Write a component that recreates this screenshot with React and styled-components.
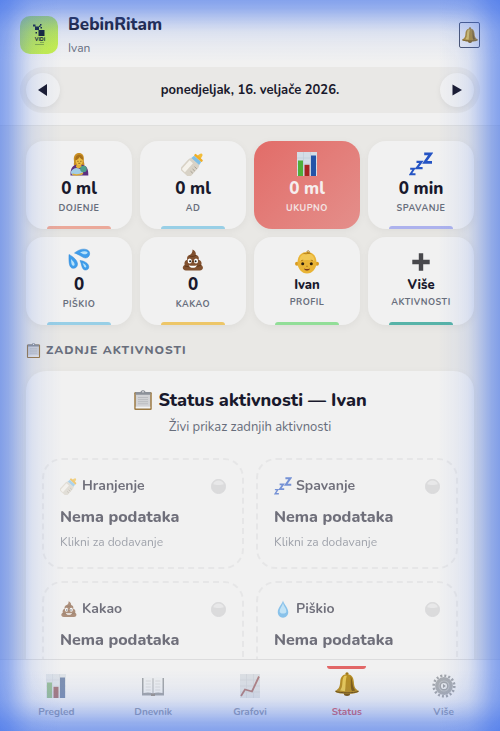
import React, { useState } from "react";
import styled, { createGlobalStyle } from "styled-components";

const GlobalStyle = createGlobalStyle`
  *, *::before, *::after {
    box-sizing: border-box;
  }
  body {
    margin: 0;
    background-color: #e9e8e5;
    color: #19192c;
    font-family: "Nunito", "Open Sans", sans-serif;
  }
  h1, h2, h3, p {
    margin: 0;
  }
  button {
    font-family: inherit;
    color: inherit;
    cursor: pointer;
  }
`;

/* ---------- icons ---------- */

const Svg = styled.svg`
  width: ${(props) => props.$size || 24}px;
  height: ${(props) => props.$size || 24}px;
  display: block;
  flex-shrink: 0;
`;

const icons = {
  nursing: (
    <>
      <path d="M7 9C6 3.500 9 1 12 1s5.500 2.500 4.800 7c-.3 2.500 1.400 4 .2 6H7.500C6.100 12.800 7.300 11 7 9z" fill="#c98f24" />
      <path d="M3.500 23.500c-.3-6 1.500-9.800 5.500-10.800h6c4.500.8 6.500 3.800 6.300 10.800z" fill="#5b2f80" />
      <path d="M9.800 12h4.200l1 3.300-4 1.500-2.200-2z" fill="#e2b038" />
      <ellipse cx="12.300" cy="8.700" rx="3.500" ry="4.200" fill="#edbf46" />
      <path d="M8.300 8.300c1.800-.4 3.400-1.700 4.200-3.400.8 1.500 2 2.500 3.700 2.900.1-3.200-1.500-5-3.900-5-2.600 0-4.200 2.200-4 5.500z" fill="#a8701a" />
      <path d="M10.300 9.300h1.300M13.200 9.300h1.300M11.300 11.300h2" stroke="#6b4312" strokeWidth=".7" />
      <path d="M4 19.500c2-3 5-4.300 8-2.800l5 1.500-2 4.500c-3 .8-6 .8-8.500.5-1.700-.3-3-1.800-2.500-3.700z" fill="#a3cde6" />
      <circle cx="16.500" cy="17" r="3.300" fill="#4f9f8c" />
      <path d="M5.500 22.300c3.500 1 7.500.7 10.500-1" stroke="#dca936" strokeWidth="1.600" fill="none" />
    </>
  ),
  bottle: (
    <g transform="rotate(42 12 12)">
      <path d="M10.300.5c.2-2.800 3.200-2.800 3.400 0l.7 3H9.600z" fill="#f2bd3a" />
      <rect x="6.800" y="2.500" width="10.400" height="2.600" rx="1" fill="#f0ae28" />
      <path d="M7.300 5.100h9.400l.6 4H6.700z" fill="#7fbfe6" />
      <path d="M6.700 8.600h10.600c1.100 1.500 1.300 2.500 1.300 4.200v8.900c0 2.100-1.100 3-2.900 3H8.300c-1.800 0-2.900-.9-2.900-3v-8.900c0-1.700.2-2.700 1.300-4.200z" fill="#d8d2c6" />
      <path d="M7 11.500h4.500v12H8.600c-1.100 0-1.600-.6-1.600-1.600z" fill="#f5f2eb" />
      <path d="M15 13h3M15 16h3M15 19h3" stroke="#9c968a" strokeWidth=".8" />
    </g>
  ),
  chart: (
    <>
      <rect x="2" y="0" width="20" height="24" fill="#d3dde6" />
      <path d="M2 6h20M2 12h20M2 18h20M8.500 0v24M15.500 0v24" stroke="#bdcad6" strokeWidth=".6" />
      <rect x="3" y="8.500" width="5" height="15.500" fill="#4fae3a" />
      <rect x="9.500" y="12.800" width="5" height="11.200" fill="#a82424" />
      <rect x="16" y="3.500" width="5" height="20.500" fill="#2354a8" />
    </>
  ),
  sleep: (
    <g fill="none" stroke="#2554c4" strokeLinejoin="miter">
      <path d="M15.200 1.800h6.500L15.700 10.300h7.300" strokeWidth="2.700" />
      <path d="M7.500 9.800h4.900L7.800 16.200h5.800" strokeWidth="2.300" />
      <path d="M1.200 16.800h3.900L1.500 22.300h5" strokeWidth="1.900" />
    </g>
  ),
  drops: (
    <g stroke="#2f86d6" strokeWidth=".5">
      <path d="M7.500 5C12 1.200 17 .2 20.500 2c3 1.700 2.800 6-.3 7.600C16.500 11.300 13.500 6.800 7.500 5z" fill="#3f9deb" />
      <path d="M2 6.500c4.200 2.200 8.500 5.700 8.500 9.600 0 3-2.200 4.400-4.500 4.200-4-.4-4.200-6-4-13.800z" fill="#3f9deb" />
      <path d="M13 12.500c4 .3 8.600 2.800 8.800 6.200.1 2.300-1.900 3.600-3.900 3.300-3.200-.5-3-5.500-4.900-9.500z" fill="#3f9deb" />
      <path d="M13 4.500c3-1.500 6-1.700 7.300-.4 1 1.200-.8 2.200-2.300 2.200-1.800 0-3.200-1-5-1.800zM4 11c1.800 2 3.600 3.500 3.600 5.500 0 1.500-1.800 1.600-2.600.4C4.200 15.600 4.200 13 4 11zM15.500 15c2 1 3.600 2 3.800 3.500 0 1-1.200 1.200-1.900.4-.8-1-1-2.500-1.900-3.900z" fill="#b6e2fb" stroke="none" />
    </g>
  ),
  poop: (
    <>
      <path d="M11.500 1.500c2.500 1.200 3.800 3 3.200 5.300 2.500.5 3.800 2.500 2.800 5 2.500.7 3.700 2.700 2.700 5.200 2.600 1.500 2.400 5.500-1.500 5.500H5c-3.700 0-4.300-4-1.300-5.500-.8-2.500.3-4.500 2.600-5.200-.8-2.500.5-4.500 2.800-5C10.500 6 11.700 4 11.500 1.500z" fill="#80502f" />
      <path d="M8.500 8.200c2.500.6 5 .2 6.600-1M6 13c3.500 1 8.500.8 11.500-.8M3.800 18c4 1.200 12 1.200 16.300-.8" stroke="#5d3519" strokeWidth=".9" fill="none" />
      <ellipse cx="8.700" cy="13" rx="2.100" ry="2.600" fill="#fff" />
      <ellipse cx="15" cy="13" rx="2.100" ry="2.600" fill="#fff" />
      <circle cx="9.100" cy="13.200" r="1" fill="#222" />
      <circle cx="14.600" cy="13.200" r="1" fill="#222" />
      <path d="M7.800 17.200c2.500.7 5.500.7 8.200 0-.8 3.300-7.200 3.500-8.200 0z" fill="#fff" />
    </>
  ),
  baby: (
    <>
      <circle cx="2" cy="13.700" r="2" fill="#d99a20" />
      <circle cx="22" cy="13.700" r="2" fill="#d99a20" />
      <path d="M12 2c6 0 9.500 4.500 9.500 10.500s-4 11-9.500 11-9.500-5-9.500-11S6 2 12 2z" fill="#e9b436" />
      <path d="M12 3.500c4.500 0 7.500 3 7.500 7.500-4.500-1.500-10.500-1.500-15 0 0-4.500 3-7.500 7.500-7.500z" fill="#f1c754" />
      <path d="M8.500 3.300c3 .9 6 .2 5.800-1.600-.1-1.300-2.300-1.300-2.300.1 0 1.100 1.800 1.700 3.500 1.600" stroke="#a87414" strokeWidth=".9" fill="none" />
      <circle cx="7.700" cy="13.800" r="1.500" fill="#2d1f10" />
      <circle cx="16.300" cy="13.800" r="1.500" fill="#2d1f10" />
      <path d="M6 10.800l2.200-.7M15.800 10.100l2.200.7M11.200 16.300h1.600" stroke="#a87414" strokeWidth=".8" />
      <path d="M9 18.500c2 .7 4 .7 6 0-.7 2.800-5.300 2.800-6 0z" fill="#7c3a1a" />
    </>
  ),
  plus: <path d="M9.800 3.300h4.400v6.500h6.500v4.400h-6.500v6.500H9.800v-6.500H3.300V9.800h6.500z" fill="#48484c" />,
  clipboard: (
    <>
      <rect x="1.500" y="2.500" width="21" height="21.500" rx="1.500" fill="#9d7a43" />
      <rect x="3.300" y="4.300" width="17.400" height="17.700" fill="#d2d3d6" />
      <path d="M6 9h12M6 11.500h12M6 14h12M6 16.500h12" stroke="#bbbdc1" strokeWidth="1.200" />
      <path d="M3.300 20h17.400v2H3.300z" fill="#f3f3f3" />
      <path d="M3 2.500h6c.7-3 5.300-3 6 0h6v3.200H3z" fill="#8c9199" />
      <circle cx="12" cy="2.200" r="1" fill="#e9e9ec" />
    </>
  ),
  bell: (
    <>
      <circle cx="12" cy="1.800" r="1.600" fill="#9d7819" />
      <ellipse cx="12" cy="21.700" rx="3.100" ry="2.200" fill="#7b5712" />
      <path d="M12 2.300c4.700 0 6.500 3.300 6.800 7.500.3 5 1.200 7.200 5 9.200.2 1.700-4.800 2.900-11.800 2.900S0 20.700.2 19c3.800-2 4.700-4.200 5-9.200C5.500 5.600 7.300 2.300 12 2.300z" fill="#b98f22" />
      <path d="M9.500 3.800C7.600 5.500 7.500 9 7.300 12c-.2 3-1 5-2.300 6.500l5 .7c.8-4 .3-11 1.800-15.400z" fill="#e9c957" />
      <path d="M15.500 4.200c2.500 3.500 1.300 10.300 4.800 14.200l-3.300.9C14.900 15 16.400 8 15.500 4.200z" fill="#805d15" />
      <path d="M.5 19.300c5 2.100 18 2.100 23 0" stroke="#6d4d10" strokeWidth="1" fill="none" />
    </>
  ),
  book: (
    <>
      <path d="M1 4h22v17.500H1z" fill="#6f767d" />
      <path d="M2.500 3.500c3.500-1 7-1 9.500.8v15.200c-3-1.300-6-1.300-9.500-.5zM21.500 3.500c-3.500-1-7-1-9.500.8v15.200c3-1.300 6-1.300 9.500-.5z" fill="#edeeef" />
      <path d="M12 4.300v15.500" stroke="#85898e" strokeWidth="1" />
      <path d="M4.700 7h5M4.700 10h5M4.700 13h5M4.700 16h5M14.300 7h5M14.300 10h5M14.300 13h5M14.300 16h5" stroke="#c3c5c8" strokeWidth=".9" />
      <path d="M10 19.500h4V22h-4z" fill="#6b5b48" />
    </>
  ),
  trend: (
    <>
      <rect x="2" y="0" width="20" height="24" fill="#cfd6dd" />
      <path d="M2 6h20M2 12h20M2 18h20M8.500 0v24M15.500 0v24" stroke="#b4c0ca" strokeWidth=".6" />
      <path d="M3 22l4-6.500 7 2L21 2.500" stroke="#ad2f2f" strokeWidth="1.800" fill="none" />
    </>
  ),
  gear: (
    <>
      <circle cx="12" cy="12" r="10.300" fill="none" stroke="#6f757d" strokeWidth="2.600" strokeDasharray="2 2.045" />
      <circle cx="12" cy="12" r="7.200" fill="#a3a7ad" stroke="#7d8289" strokeWidth="3.400" />
      <circle cx="12" cy="12" r="3.800" fill="#e2e4e7" stroke="#70757c" strokeWidth="1.400" />
      <path d="M11 10l2.800 2-2.800 2z" fill="#62676e" />
    </>
  ),
  drop: (
    <>
      <path d="M12 .5c1.200 5 7 9.500 7 15.500 0 4.500-3 7.500-7 7.500s-7-3-7-7.500C5 10 10.800 5.500 12 .5z" fill="#45a3e6" />
      <path d="M12 4c.8 4 4.500 7 4.500 11 0 2.500-2 3-4.500 3s-4.500-.8-4.500-3C7.500 11.500 11 8 12 4z" fill="#a4dafa" />
    </>
  ),
  dot: (
    <>
      <circle cx="12" cy="12" r="11.500" fill="#cdcdcf" stroke="#c6c6c9" />
      <path d="M3.500 8.500C5 4.500 8 2.500 12 2.500s7 2 8.500 6c-4.500 1.500-12.500 1.500-17 0z" fill="#e3e3e4" />
    </>
  ),
};

const Icon = ({ name, size }) => (
  <Svg viewBox="0 0 24 24" $size={size} aria-hidden="true">
    {icons[name]}
  </Svg>
);

const Logo = () => (
  <Svg viewBox="0 0 38 38" $size={38} aria-hidden="true">
    <defs>
      <linearGradient id="logo" x1="0" y1="0" x2=".4" y2="1">
        <stop offset="0" stopColor="#b4e45c" />
        <stop offset="1" stopColor="#c8f24a" />
      </linearGradient>
    </defs>
    <rect width="38" height="38" rx="10" fill="url(#logo)" />
    <g fill="#101a22">
      <path d="M18.500 14h6v6h-6zM15 10.500h4V14h-4zM13 8.500h2.500v2H13zM20 8h1.500v1.500H20zM19 9.500h1.500V11H19zM20.500 11h1.500v1.500h-1.500zM15.500 16h1.500v1.500h-1.500z" />
      <text x="20" y="25" fontSize="5" fontWeight="800" textAnchor="middle">VIDI</text>
    </g>
    <path d="M20 26.500h4M15 28.500h9" stroke="#7aa23c" strokeWidth=".8" />
  </Svg>
);

/* ---------- layout ---------- */

const Page = styled.div`
  height: 100vh;
  display: flex;
  flex-direction: column;
`;

const Glow = styled.div`
  --c: 66, 114, 234;
  --stops: rgba(var(--c), 0.62) 0, rgba(var(--c), 0.53) 8px, rgba(var(--c), 0.38) 16px,
    rgba(var(--c), 0.24) 24px, rgba(var(--c), 0.12) 32px, rgba(var(--c), 0.05) 44px,
    rgba(var(--c), 0) 62px;
  position: fixed;
  inset: 0;
  z-index: 10;
  pointer-events: none;
  background: linear-gradient(to right, var(--stops)), linear-gradient(to left, var(--stops)),
    linear-gradient(to bottom, var(--stops)), linear-gradient(to top, var(--stops));
`;

const Header = styled.header`
  display: flex;
  flex-direction: column;
  gap: 9px;
  padding: 12px 20px;
  background-color: #f1f1f1;
  border-bottom: 1px solid #dfdfdd;
`;

const TopRow = styled.div`
  display: flex;
  align-items: center;
  gap: 10px;
  min-height: 46px;
`;

const Brand = styled.div`
  flex: 1;
`;

const AppName = styled.h1`
  font-size: 17px;
  line-height: 22px;
  font-weight: 800;
`;

const ChildName = styled.p`
  margin-top: 4px;
  font-size: 12px;
  line-height: 16px;
  color: #686e7c;
`;

const BellButton = styled.button`
  display: flex;
  align-items: center;
  justify-content: center;
  width: 21px;
  height: 26px;
  padding: 0;
  background: transparent;
  border: 1px solid #4b5268;
  border-radius: 2px;
`;

const DateBar = styled.div`
  display: flex;
  align-items: center;
  justify-content: space-between;
  padding: 6px;
  border-radius: 23px;
  background-color: #e9e8e6;
`;

const DateText = styled.span`
  font-size: 13px;
  font-weight: 700;
`;

const DayButton = styled.button`
  display: flex;
  align-items: center;
  justify-content: center;
  width: 34px;
  height: 34px;
  padding: 0;
  border: none;
  border-radius: 50%;
  background-color: #f1f1f1;
  box-shadow: 0 2px 6px rgba(0, 0, 0, 0.06);
`;

const Main = styled.main`
  flex: 1;
  min-height: 0;
  overflow-y: auto;
  scrollbar-width: none;
  padding: 15px 26px;
`;

const StatGrid = styled.div`
  display: grid;
  grid-template-columns: repeat(4, 1fr);
  gap: 8px;
`;

const StatCard = styled.button`
  position: relative;
  display: flex;
  flex-direction: column;
  align-items: center;
  justify-content: center;
  gap: 2px;
  height: 88px;
  padding: 0 0 4px;
  border: none;
  border-radius: 18px;
  overflow: hidden;
  background: ${(props) => (props.$active ? "linear-gradient(135deg, #e26c68, #e48f8b)" : "#f1f1f1")};
  color: ${(props) => (props.$active ? "#f6eeee" : "#19192c")};
  box-shadow: 0 2px 8px rgba(0, 0, 0, 0.05);

  &::after {
    content: "";
    position: absolute;
    bottom: 0;
    left: 20%;
    right: 20%;
    height: 3px;
    border-radius: 3px 3px 0 0;
    background-color: ${(props) => props.$bar || "transparent"};
  }
`;

const StatValue = styled.span`
  font-size: ${(props) => (props.$small ? "13px" : "17px")};
  line-height: ${(props) => (props.$small ? "18px" : "22px")};
  font-weight: 800;
`;

const StatLabel = styled.span`
  font-size: 9px;
  line-height: 12px;
  font-weight: 700;
  letter-spacing: 0.5px;
  text-transform: uppercase;
  color: ${(props) => (props.$active ? "#f3e3e3" : "#686e7c")};
`;

const SectionTitle = styled.h2`
  display: flex;
  align-items: center;
  gap: 5px;
  margin: 16px 0 12px;
  font-size: 12px;
  line-height: 18px;
  font-weight: 800;
  letter-spacing: 1px;
  text-transform: uppercase;
  color: #686e7c;
`;

const Panel = styled.section`
  padding: 16px;
  border-radius: 20px;
  background-color: #f1f1f1;
  box-shadow: 0 2px 8px rgba(0, 0, 0, 0.04);
`;

const PanelTitle = styled.h2`
  display: flex;
  align-items: center;
  justify-content: center;
  gap: 5px;
  font-size: 18px;
  line-height: 26px;
  font-weight: 800;
`;

const PanelText = styled.p`
  margin: 4px 0 21px;
  text-align: center;
  font-size: 13px;
  line-height: 20px;
  color: #686e7c;
`;

const StatusGrid = styled.div`
  display: grid;
  grid-template-columns: 1fr 1fr;
  gap: 12px;
`;

const StatusCard = styled.button`
  padding: 16px;
  border: 2px dashed #e0e0e1;
  border-radius: 20px;
  background: transparent;
  text-align: left;
  opacity: 0.6;
`;

const StatusHead = styled.div`
  display: flex;
  align-items: center;
  gap: 4px;
  margin-bottom: 10px;
  font-size: 14px;
  line-height: 20px;
  font-weight: 700;
`;

const StatusName = styled.span`
  flex: 1;
`;

const StatusValue = styled.div`
  margin-bottom: 6px;
  font-size: 16px;
  line-height: 22px;
  font-weight: 800;
`;

const StatusHint = styled.div`
  font-size: 12px;
  line-height: 17px;
  color: #686e7c;
`;

const Nav = styled.nav`
  display: flex;
  padding: 6px 8px 11px;
  border-top: 1px solid #dcdcdd;
  background-color: #f1f1f1;
`;

const NavButton = styled.button`
  position: relative;
  flex: 1;
  display: flex;
  flex-direction: column;
  align-items: center;
  gap: 6px;
  padding: 8px 0 0;
  border: none;
  background: transparent;
  font-size: 10px;
  line-height: 16px;
  font-weight: 700;
  color: ${(props) => (props.$active ? "#e0605f" : "#9ca0ab")};

  svg {
    opacity: ${(props) => (props.$active ? 1 : 0.6)};
    filter: ${(props) => (props.$active ? "none" : "grayscale(0.4)")};
    transform: ${(props) => (props.$active ? "translateY(-2px)" : "none")};
  }

  &::before {
    content: "";
    position: absolute;
    top: 0;
    left: 30%;
    right: 30%;
    height: 3px;
    border-radius: 0 0 3px 3px;
    background-color: ${(props) => (props.$active ? "#e26767" : "transparent")};
  }
`;

const stats = [
  { icon: "nursing", value: "0 ml", label: "Dojenje", bar: "#eba99a" },
  { icon: "bottle", value: "0 ml", label: "AD", bar: "#98cfe6" },
  { icon: "chart", value: "0 ml", label: "Ukupno", active: true },
  { icon: "sleep", value: "0 min", label: "Spavanje", bar: "#adb2ed" },
  { icon: "drops", value: "0", label: "Piškio", bar: "#98cfe6" },
  { icon: "poop", value: "0", label: "Kakao", bar: "#edc668" },
  { icon: "baby", value: "Ivan", label: "Profil", bar: "#92de98", small: true },
  { icon: "plus", value: "Više", label: "Aktivnosti", bar: "#57b3a8", small: true },
];

const statuses = [
  { icon: "bottle", name: "Hranjenje" },
  { icon: "sleep", name: "Spavanje" },
  { icon: "poop", name: "Kakao" },
  { icon: "drop", name: "Piškio" },
];

const tabs = [
  { icon: "chart", name: "Pregled" },
  { icon: "book", name: "Dnevnik" },
  { icon: "trend", name: "Grafovi" },
  { icon: "bell", name: "Status" },
  { icon: "gear", name: "Više" },
];

function App() {
  const [tab, setTab] = useState("Status");

  return (
    <Page>
      <GlobalStyle />
      <Header>
        <TopRow>
          <Logo />
          <Brand>
            <AppName>BebinRitam</AppName>
            <ChildName>Ivan</ChildName>
          </Brand>
          <BellButton aria-label="Obavijesti">
            <Icon name="bell" size={16} />
          </BellButton>
        </TopRow>
        <DateBar>
          <DayButton aria-label="Prethodni dan">
            <svg width="10" height="12" viewBox="0 0 10 12">
              <path d="M9 0v12L0 6z" fill="#19192c" />
            </svg>
          </DayButton>
          <DateText>ponedjeljak, 16. veljače 2026.</DateText>
          <DayButton aria-label="Sljedeći dan">
            <svg width="10" height="12" viewBox="0 0 10 12">
              <path d="M.5 .5v11l9.500-5.500z" fill="#19192c" />
            </svg>
          </DayButton>
        </DateBar>
      </Header>
      <Main>
        <StatGrid>
          {stats.map((s) => (
            <StatCard key={s.label} $active={s.active} $bar={s.bar}>
              <Icon name={s.icon} />
              <StatValue $small={s.small}>{s.value}</StatValue>
              <StatLabel $active={s.active}>{s.label}</StatLabel>
            </StatCard>
          ))}
        </StatGrid>
        <SectionTitle>
          <Icon name="clipboard" size={15} />
          Zadnje aktivnosti
        </SectionTitle>
        <Panel>
          <PanelTitle>
            <Icon name="clipboard" size={20} />
            Status aktivnosti — Ivan
          </PanelTitle>
          <PanelText>Živi prikaz zadnjih aktivnosti</PanelText>
          <StatusGrid>
            {statuses.map((s) => (
              <StatusCard key={s.name}>
                <StatusHead>
                  <Icon name={s.icon} size={18} />
                  <StatusName>{s.name}</StatusName>
                  <Icon name="dot" size={15} />
                </StatusHead>
                <StatusValue>Nema podataka</StatusValue>
                <StatusHint>Klikni za dodavanje</StatusHint>
              </StatusCard>
            ))}
          </StatusGrid>
        </Panel>
      </Main>
      <Nav>
        {tabs.map((t) => (
          <NavButton key={t.name} $active={t.name === tab} onClick={() => setTab(t.name)}>
            <Icon name={t.icon} />
            {t.name}
          </NavButton>
        ))}
      </Nav>
      <Glow />
    </Page>
  );
}

export default App;
